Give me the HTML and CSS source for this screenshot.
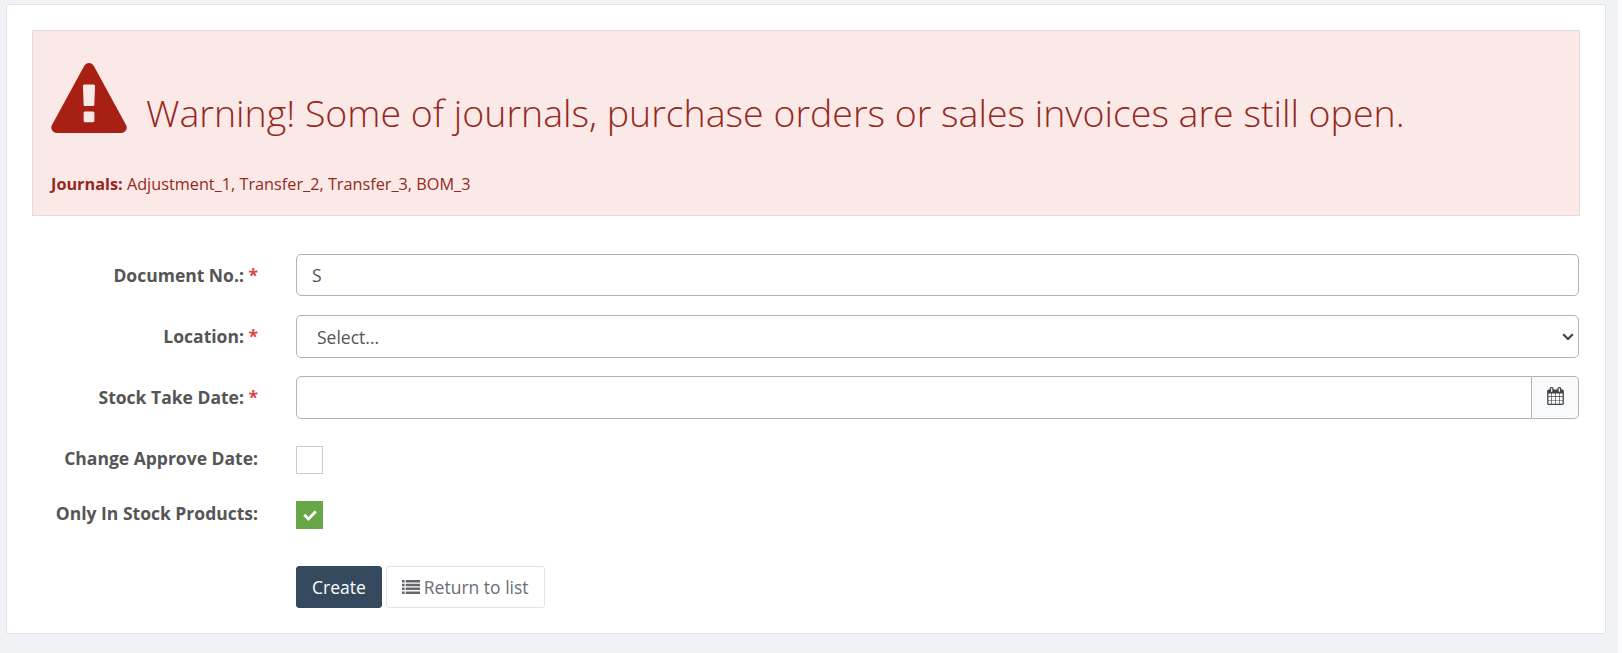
FILE: index.html
```html
<!DOCTYPE html>
<html lang="en">
<head>
    <meta charset="UTF-8">
    <meta name="viewport" content="width=device-width, initial-scale=1.0">
    <title>Stock Take</title>
    <link rel="stylesheet" href="styles.css">
</head>
<body>
    <div class="page">
        <div class="panel">
            <!-- Warning -->
            <div class="alert">
                <div class="alert-head">
                    <svg class="alert-icon" viewBox="0 0 1792 1664"><path d="M1024 1375v-190q0-14-9.500-23.500t-22.500-9.500h-192q-13 0-22.500 9.500t-9.500 23.500v190q0 14 9.500 23.500t22.500 9.500h192q13 0 22.500-9.500t9.500-23.500zm-2-374l18-459q0-12-10-19-13-11-24-11h-220q-11 0-24 11-10 7-10 21l17 457q0 10 10 16.500t24 6.500h185q14 0 23.500-6.500t10.500-16.500zm-14-934l768 1408q35 63-2 126-17 29-46.500 46t-63.500 17h-1536q-34 0-63.500-17t-46.500-46q-37-63-2-126l768-1408q17-31 47-49t65-18 65 18 47 49z"/></svg>
                    <h1>Warning! Some of journals, purchase orders or sales invoices are still open.</h1>
                </div>
                <p class="alert-text"><b>Journals:</b> Adjustment_1, Transfer_2, Transfer_3, BOM_3</p>
            </div>

            <!-- Form -->
            <form class="form">
                <div class="form-row">
                    <label for="doc-no">Document No.: <span class="required">*</span></label>
                    <input type="text" id="doc-no" class="form-control" value="S">
                </div>
                <div class="form-row">
                    <label for="location">Location: <span class="required">*</span></label>
                    <div class="select-wrap">
                        <select id="location" class="form-control tall">
                            <option>Select...</option>
                        </select>
                        <svg class="arrow-icon" viewBox="0 0 12 8"><path d="M1.200 1.200L6 6L10.800 1.200"/></svg>
                    </div>
                </div>
                <div class="form-row">
                    <label for="date">Stock Take Date: <span class="required">*</span></label>
                    <div class="input-group">
                        <input type="text" id="date" class="form-control tall">
                        <span class="addon">
                            <svg class="calendar-icon" viewBox="64 0 1664 1792"><path d="M192 1664h288v-288h-288v288zm352 0h320v-288h-320v288zm-352-352h288v-320h-288v320zm352 0h320v-320h-320v320zm-352-384h288v-288h-288v288zm736 736h320v-288h-320v288zm-384-736h320v-288h-320v288zm768 736h288v-288h-288v288zm-384-352h320v-320h-320v320zm-352-864v-288q0-13-9.500-22.500t-22.500-9.500h-64q-13 0-22.500 9.500t-9.500 22.500v288q0 13 9.500 22.500t22.500 9.500h64q13 0 22.500-9.500t9.500-22.500zm736 864h288v-320h-288v320zm-384-384h320v-288h-320v288zm384 0h288v-288h-288v288zm32-480v-288q0-13-9.500-22.500t-22.500-9.500h-64q-13 0-22.500 9.500t-9.500 22.500v288q0 13 9.500 22.500t22.500 9.500h64q13 0 22.500-9.500t9.500-22.500zm384-64v1280q0 52-38 90t-90 38h-1408q-52 0-90-38t-38-90v-1280q0-52 38-90t90-38h128v-96q0-66 47-113t113-47h64q66 0 113 47t47 113v96h384v-96q0-66 47-113t113-47h64q66 0 113 47t47 113v96h128q52 0 90 38t38 90z"/></svg>
                        </span>
                    </div>
                </div>
                <div class="form-row check-row">
                    <label>Change Approve Date:</label>
                    <span class="checkbox"></span>
                </div>
                <div class="form-row check-row">
                    <label>Only In Stock Products:</label>
                    <span class="checkbox checked">
                        <svg class="check-icon" viewBox="0 0 14 11"><path d="M1.200 4.800L5.400 9L12.800 1.500"/></svg>
                    </span>
                </div>
                <div class="buttons">
                    <button type="button" class="btn btn-primary">Create</button>
                    <button type="button" class="btn btn-default">
                        <svg class="list-icon" viewBox="0 0 18 14"><path d="M0 0h2.600v2.500H0zM3.700 0H18v2.500H3.700zM0 3.800h2.600v2.500H0zM3.700 3.800H18v2.500H3.700zM0 7.600h2.600v2.500H0zM3.700 7.600H18v2.500H3.700zM0 11.400h2.600v2.500H0zM3.700 11.400H18v2.500H3.700z"/></svg>
                        <span>Return to list</span>
                    </button>
                </div>
            </form>
        </div>
    </div>
</body>
</html>
```

FILE: styles.css
```css
* {
    box-sizing: border-box;
}

body {
    margin: 0;
    height: 653px;
    overflow: hidden;
    background-color: #fcfcfe;
    font-family: "Open Sans", sans-serif;
    font-size: 17.5px;
    color: #555;
}

.page {
    height: 653px;
    margin-right: 4px;
    padding: 4px 12px 0 6px;
    background-color: #f1f2f6;
}

.panel {
    height: 630px;
    padding: 25px;
    background-color: #fff;
    border: 1px solid #e0e3e7;
    border-radius: 2px;
}

.alert {
    height: 186px;
    padding: 32px 18px 0;
    background-color: #fbe9e7;
    border: 1px solid #e3dbde;
    color: #952820;
}

.alert-head {
    display: flex;
    height: 72px;
}

.alert-icon {
    width: 76px;
    height: 70px;
    margin-right: 19px;
    fill: #a82014;
}

h1 {
    margin: 22px 0 0;
    font-size: 37.5px;
    font-weight: 300;
    line-height: 56px;
    white-space: nowrap;
}

.alert-text {
    margin: 37px 0 0;
    font-size: 16.25px;
    line-height: 24px;
}

.form {
    padding-top: 38px;
}

.form-row {
    display: flex;
    height: 61px;
    padding-right: 1px;
}

.form-row label {
    width: 226px;
    margin-right: 38px;
    padding-top: 8px;
    font-weight: 700;
    line-height: 26px;
    text-align: right;
    white-space: nowrap;
}

.required {
    color: #e0443e;
}

.form-control {
    flex: 1;
    height: 42px;
    padding: 0 15px;
    background-color: #fff;
    border: 1px solid #b3b3b6;
    border-radius: 5px;
    font-family: inherit;
    font-size: 17.5px;
    color: #555;
}

.form-control.tall {
    height: 43px;
}

.select-wrap {
    position: relative;
    flex: 1;
    display: flex;
}

.select-wrap .form-control {
    appearance: none;
    padding: 0 20px;
}

.arrow-icon {
    position: absolute;
    top: 18px;
    right: 5px;
    width: 12px;
    height: 8px;
    fill: none;
    stroke: #444;
    stroke-width: 2.2;
    pointer-events: none;
}

.input-group {
    flex: 1;
    display: flex;
}

.input-group .form-control {
    border-radius: 5px 0 0 5px;
}

.addon {
    display: flex;
    align-items: center;
    justify-content: center;
    width: 47px;
    height: 43px;
    padding-bottom: 3px;
    background-color: #f9fafc;
    border: 1px solid #b3b3b6;
    border-left: none;
    border-radius: 0 5px 5px 0;
}

.calendar-icon {
    width: 17px;
    height: 18px;
    fill: #444;
}

.check-row {
    height: 55px;
}

.checkbox {
    display: flex;
    align-items: center;
    justify-content: center;
    width: 27px;
    height: 28px;
    margin-top: 9px;
    border: 1px solid #ccc;
}

.checkbox.checked {
    background-color: #67a748;
    border-color: #67a748;
}

.check-icon {
    width: 14px;
    height: 11px;
    fill: none;
    stroke: #fff;
    stroke-width: 2.8;
}

.buttons {
    display: flex;
    gap: 4px;
    padding: 19px 0 0 264px;
}

.btn {
    display: flex;
    align-items: center;
    height: 42px;
    padding: 0 15px;
    border: 1px solid #e4e4e6;
    border-radius: 3px;
    font-family: inherit;
    font-size: 17.5px;
    white-space: nowrap;
}

.btn-primary {
    background-color: #34495e;
    border-color: #34495e;
    color: #fff;
}

.btn-default {
    background-color: #fff;
    color: #6c6c72;
}

.list-icon {
    width: 18px;
    height: 14px;
    margin-right: 4px;
    fill: #66666c;
}
```
